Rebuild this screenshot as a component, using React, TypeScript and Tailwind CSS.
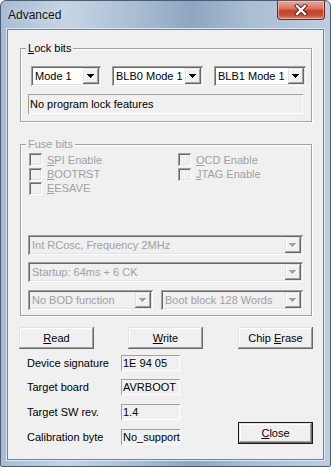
import React from "react";

const raised =
  "bg-[#f0f0f0] shadow-[inset_-1px_-1px_0_#696969,inset_1px_1px_0_#e3e3e3,inset_-2px_-2px_0_#a0a0a0,inset_2px_2px_0_#fff]";
const sunken =
  "shadow-[inset_1px_1px_0_#a0a0a0,inset_-1px_-1px_0_#fff,inset_2px_2px_0_#696969,inset_-2px_-2px_0_#e3e3e3]";
const thinSunken = "shadow-[inset_1px_1px_0_#a0a0a0,inset_-1px_-1px_0_#fff]";

function Triangle({ disabled }: { disabled?: boolean }) {
  return (
    <svg width="8" height="5" viewBox="0 0 8 5" shapeRendering="crispEdges">
      {disabled ? (
        <path d="M1 1h7v1h-1v1h-1v1h-1v1h-1v-1h-1v-1h-1v-1h-1z" fill="#fff" />
      ) : null}
      <path
        d="M0 0h7v1h-1v1h-1v1h-1v1h-1v-1h-1v-1h-1v-1h-1z"
        fill={disabled ? "#a0a0a0" : "#000"}
      />
    </svg>
  );
}

function Combo({
  value,
  width,
  disabled,
}: {
  value: string;
  width: string;
  disabled?: boolean;
}) {
  return (
    <div
      className={[
        "flex h-[20px] items-stretch p-[2px]",
        width,
        sunken,
        disabled ? "bg-[#f0f0f0] text-[#a0a0a0]" : "bg-white text-black",
      ].join(" ")}
    >
      <span className="flex min-w-0 flex-1 items-center truncate pl-[2px] leading-[14px]">
        {value}
      </span>
      <span className={["flex w-[16px] items-center justify-center", raised].join(" ")}>
        <Triangle disabled={disabled} />
      </span>
    </div>
  );
}

function Group({
  label,
  disabled,
  className,
  children,
}: {
  label: React.ReactNode;
  disabled?: boolean;
  className: string;
  children: React.ReactNode;
}) {
  return (
    <div
      className={[
        "relative border border-[#a0a0a0] shadow-[1px_1px_0_#fff,inset_1px_1px_0_#fff]",
        className,
      ].join(" ")}
    >
      <span
        className={[
          "absolute left-[5px] top-[-8px] bg-[#f0f0f0] px-[2px] leading-[14px]",
          disabled ? "text-[#a0a0a0]" : "text-black",
        ].join(" ")}
      >
        {label}
      </span>
      {children}
    </div>
  );
}

function Check({ children }: { children: React.ReactNode }) {
  return (
    <div className="flex items-center gap-[5px]">
      <span className={["h-[13px] w-[13px] bg-[#f0f0f0]", sunken].join(" ")} />
      <span className="leading-[14px] text-[#a0a0a0]">{children}</span>
    </div>
  );
}

function Button({
  children,
  isDefault,
}: {
  children: React.ReactNode;
  isDefault?: boolean;
}) {
  return (
    <div
      className={[
        "flex h-[22px] w-[75px] items-center justify-center leading-[14px]",
        isDefault ? "border border-[#1a1a1a]" : "",
        raised,
      ].join(" ")}
    >
      <span>{children}</span>
    </div>
  );
}

function Field({ label, value }: { label: string; value: string }) {
  return (
    <div className="flex h-[16px] items-center">
      <span className="w-[94px] leading-[14px]">{label}</span>
      <span
        className={[
          "flex h-[16px] w-[59px] items-center bg-[#f0f0f0] pl-[2px] leading-[14px]",
          thinSunken,
        ].join(" ")}
      >
        {value}
      </span>
    </div>
  );
}

export default function App() {
  return (
    <div className="h-[467px] w-[331px] bg-white font-['Liberation_Sans',Arial,sans-serif] text-[11px] text-black">
      <div className="flex h-full w-full flex-col rounded-t-[6px] rounded-b-[2px] border border-[#4a5d75] bg-[linear-gradient(90deg,#a6bbd3_0%,#c6d5e5_20%,#a3b8cf_45%,#8da6c1_58%,#a9bdd3_75%,#bccde0_100%)]">
        <div className="flex h-[28px] shrink-0 items-start justify-between">
          <span className="pl-[7px] pt-[7px] text-[12px] leading-[15px] text-[#111] [text-shadow:0_0_6px_#e8eef5]">
            Advanced
          </span>
          <span className="mr-[5px] flex h-[19px] w-[48px] items-center justify-center rounded-b-[4px] border border-t-0 border-[#6b2a22] bg-[linear-gradient(180deg,#e9a89a_0%,#d97a64_40%,#c2402a_55%,#c85338_80%,#e08c6e_100%)] shadow-[inset_0_0_0_1px_rgba(255,220,210,0.5)]">
            <svg width="14" height="12" viewBox="0 0 14 12">
              <path
                d="M3 2l8 8M11 2l-8 8"
                stroke="#4a1d16"
                strokeWidth="4.2"
                strokeLinecap="square"
              />
              <path
                d="M3 2l8 8M11 2l-8 8"
                stroke="#fff"
                strokeWidth="2.4"
                strokeLinecap="square"
              />
            </svg>
          </span>
        </div>

        <div className="ml-[6px] flex h-[431px] w-[317px] flex-col border border-[#6f839c] bg-[#f0f0f0] shadow-[0_0_0_1px_#dfe8f2]">
          <Group
            label={
              <>
                <u>L</u>ock bits
              </>
            }
            className="ml-[12px] mt-[18px] h-[74px] w-[292px]"
          >
            <div className="flex gap-[11px] pl-[10px] pt-[17px]">
              <Combo value="Mode 1" width="w-[70px]" />
              <Combo value="BLB0 Mode 1" width="w-[91px]" />
              <Combo value="BLB1 Mode 1" width="w-[92px]" />
            </div>
            <div
              className={[
                "ml-[7px] mt-[8px] flex h-[20px] w-[275px] items-center bg-[#f0f0f0] pl-[2px] leading-[14px]",
                thinSunken,
              ].join(" ")}
            >
              No program lock features
            </div>
          </Group>

          <Group
            label="Fuse bits"
            disabled
            className="ml-[12px] mt-[22px] h-[172px] w-[292px]"
          >
            <div className="grid grid-cols-[149px_1fr] pl-[8px] pt-[7px]">
              <div className="flex flex-col">
                <div className="flex h-[15px] items-center">
                  <Check>
                    <u>S</u>PI Enable
                  </Check>
                </div>
                <div className="flex h-[14px] items-center">
                  <Check>
                    <u>B</u>OOTRST
                  </Check>
                </div>
                <div className="flex h-[14px] items-center">
                  <Check>
                    <u>E</u>ESAVE
                  </Check>
                </div>
              </div>
              <div className="flex flex-col">
                <div className="flex h-[15px] items-center">
                  <Check>
                    <u>O</u>CD Enable
                  </Check>
                </div>
                <div className="flex h-[14px] items-center">
                  <Check>
                    <u>J</u>TAG Enable
                  </Check>
                </div>
              </div>
            </div>
            <div className="flex flex-col pl-[7px] pt-[40px]">
              <Combo value="Int RCosc, Frequency 2MHz" width="w-[275px]" disabled />
              <div className="mt-[7px]">
                <Combo value="Startup: 64ms + 6 CK" width="w-[275px]" disabled />
              </div>
              <div className="mt-[8px] flex gap-[8px]">
                <Combo value="No BOD function" width="w-[125px]" disabled />
                <Combo value="Boot block 128 Words" width="w-[142px]" disabled />
              </div>
            </div>
          </Group>

          <div className="ml-[11px] mt-[11px] flex gap-[34px]">
            <Button>
              <u>R</u>ead
            </Button>
            <Button>
              <u>W</u>rite
            </Button>
            <div className="ml-[1px]">
              <Button>
                Chip <u>E</u>rase
              </Button>
            </div>
          </div>

          <div className="mt-[6px] flex">
            <div className="ml-[19px] flex w-[211px] flex-col">
              <Field label="Device signature" value="1E 94 05" />
              <div className="mt-[8px]">
                <Field label="Target board" value="AVRBOOT" />
              </div>
              <div className="mt-[9px]">
                <Field label="Target SW rev." value="1.4" />
              </div>
              <div className="mt-[9px]">
                <Field label="Calibration byte" value="No_support" />
              </div>
            </div>
            <div className="mt-[67px]">
              <Button isDefault>
                <u>C</u>lose
              </Button>
            </div>
          </div>
        </div>
      </div>
    </div>
  );
}
